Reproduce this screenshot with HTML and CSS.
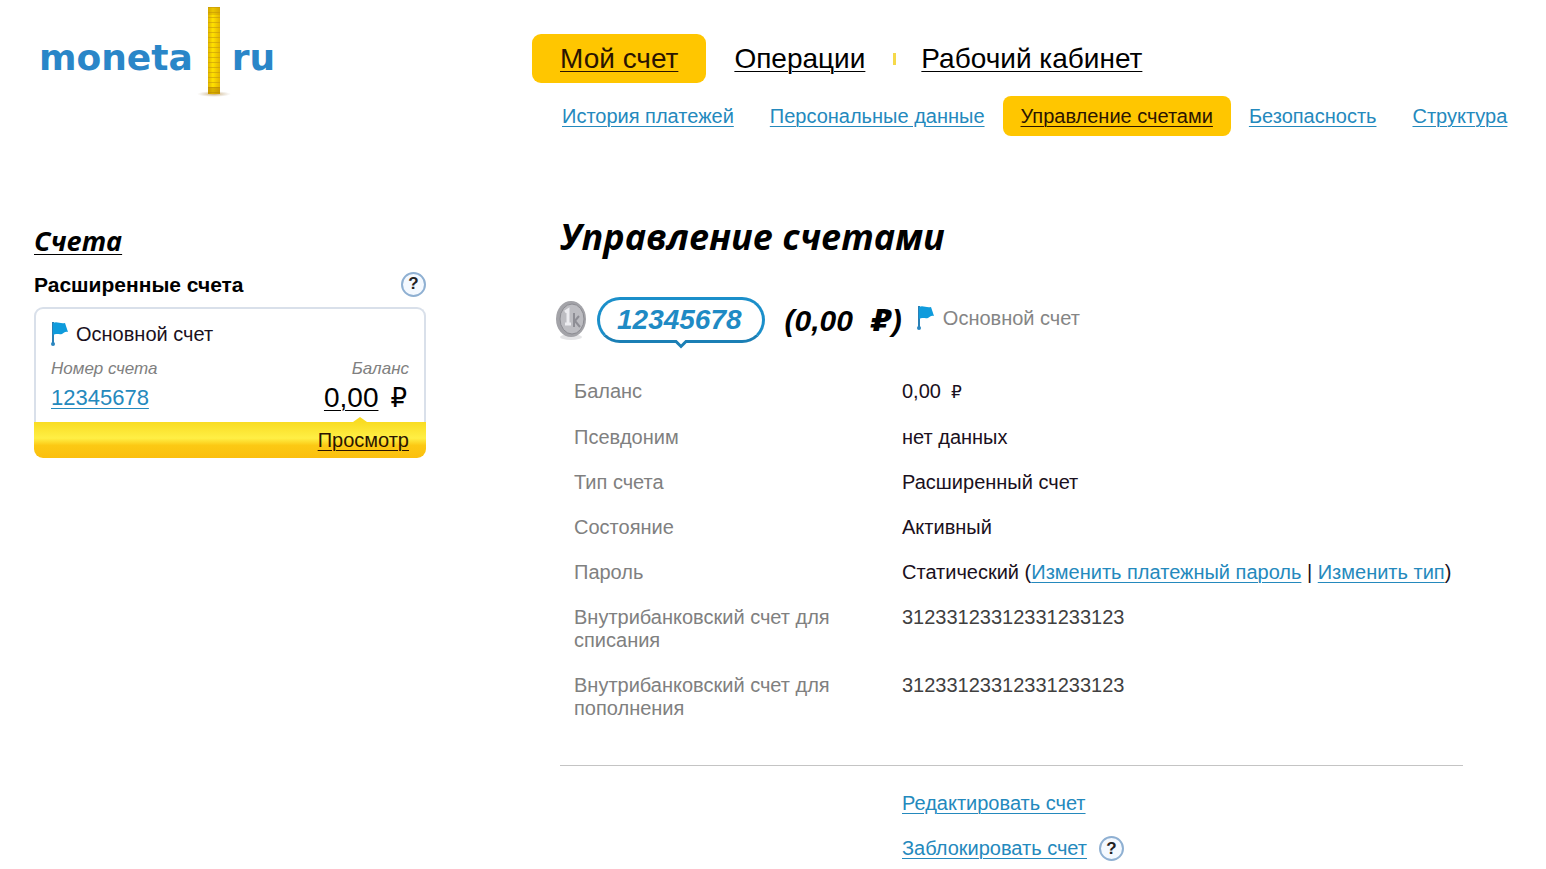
FILE: index.html
```html
<!DOCTYPE html>
<html lang="ru">
<head>
  <meta charset="UTF-8" />
  <meta name="viewport" content="width=device-width, initial-scale=1.0">
  <title>Управление счетами</title>
  <link rel="stylesheet" href="styles.css">
</head>
<body>

<!-- Шапка -->
<header class="header">
  <a class="logo" href="#">
    <span>moneta</span>
    <svg class="stack" width="36" height="96" viewBox="0 0 36 96">
      <defs>
        <linearGradient id="gold" x1="0" x2="1" y1="0" y2="0">
          <stop offset="0" stop-color="#e0b400" />
          <stop offset="0.4" stop-color="#ffe100" />
          <stop offset="1" stop-color="#e3b500" />
        </linearGradient>
        <pattern id="coins" width="12" height="5" patternUnits="userSpaceOnUse">
          <rect width="12" height="1" y="4" fill="#c79a0c" fill-opacity="0.6" />
        </pattern>
        <radialGradient id="shade">
          <stop offset="0" stop-color="#b8862c" stop-opacity="0.7" />
          <stop offset="1" stop-color="#b8a890" stop-opacity="0" />
        </radialGradient>
      </defs>
      <ellipse cx="18" cy="91" rx="17" ry="3" fill="url(#shade)" />
      <rect x="12" y="4" width="12" height="87" fill="url(#gold)" />
      <rect x="12" y="4" width="12" height="87" fill="url(#coins)" />
      <rect x="12" y="4" width="12" height="8" fill="#c39300" fill-opacity="0.35" />
      <rect x="12" y="84" width="12" height="7" fill="#b07a00" fill-opacity="0.45" />
    </svg>
    <span>ru</span>
  </a>

  <div class="menus">
    <nav class="menu">
      <a class="active" href="#">Мой счет</a>
      <a href="#">Операции</a>
      <i class="sep"></i>
      <a href="#">Рабочий кабинет</a>
    </nav>
    <nav class="submenu">
      <a href="#">История платежей</a>
      <a href="#">Персональные данные</a>
      <a class="active" href="#">Управление счетами</a>
      <a href="#">Безопасность</a>
      <a href="#">Структура</a>
    </nav>
  </div>
</header>

<div class="page">

  <!-- Список счетов -->
  <aside class="sidebar">
    <h2><a href="#">Счета</a></h2>
    <div class="group">
      <h3>Расширенные счета</h3>
      <button class="help" type="button" aria-label="Помощь">?</button>
    </div>
    <div class="card">
      <div class="card-body">
        <div class="card-name">
          <svg class="flag" width="18" height="26" viewBox="0 0 18 26">
            <path d="M2 1v23" stroke="#2a7fb5" stroke-width="2" />
            <path d="M2 2c4-2 7 1 12 0l3 9c-3-1-4 1-6 2-3 1-5-1-9 1z" fill="#0f9bdc" />
            <circle cx="2" cy="23" r="2" fill="#2a86c0" />
          </svg>
          <span>Основной счет</span>
        </div>
        <div class="card-row small">
          <span>Номер счета</span>
          <span>Баланс</span>
        </div>
        <div class="card-row">
          <a class="number" href="#">12345678</a>
          <span class="sum"><a href="#">0,00</a><span class="rub">₽</span></span>
        </div>
      </div>
      <div class="card-footer">
        <a href="#">Просмотр</a>
      </div>
    </div>
  </aside>

  <!-- Выбранный счет -->
  <main class="content">
    <h1>Управление счетами</h1>

    <div class="account">
      <svg class="coin" width="32" height="42" viewBox="0 0 32 42">
        <ellipse cx="16" cy="38" rx="11" ry="3" fill="#e4e4e6" />
        <ellipse cx="16" cy="20" rx="15" ry="18" fill="#a3a3a8" />
        <ellipse cx="17" cy="20" rx="12" ry="15" fill="#bdbdc2" stroke="#8b8b91" />
        <path d="M10 13l3-2v14m-3 0h6" fill="none" stroke="#ececf0" stroke-width="3" />
        <path d="M19 14v14m0-5l5-6m-4 5l5 6" fill="none" stroke="#8e8e95" stroke-width="2" />
      </svg>
      <span class="bubble">
        12345678
        <svg class="tail" width="16" height="9" viewBox="0 0 16 9">
          <path d="M2 0h12v1l-6 6-6-6z" fill="#fff" />
          <path d="M0 1.5h3l5 5 5-5h3" fill="none" stroke="#1b7fb5" stroke-width="3" />
        </svg>
      </span>
      <span class="total">(0,00<span class="rub">₽</span>)</span>
      <svg class="flag" width="18" height="26" viewBox="0 0 18 26">
        <path d="M2 1v23" stroke="#2a7fb5" stroke-width="2" />
        <path d="M2 2c4-2 7 1 12 0l3 9c-3-1-4 1-6 2-3 1-5-1-9 1z" fill="#0f9bdc" />
        <circle cx="2" cy="23" r="2" fill="#2a86c0" />
      </svg>
      <span class="type">Основной счет</span>
    </div>

    <table class="details">
      <tr><th scope="row">Баланс</th><td>0,00<span class="rub">₽</span></td></tr>
      <tr><th scope="row">Псевдоним</th><td>нет данных</td></tr>
      <tr><th scope="row">Тип счета</th><td>Расширенный счет</td></tr>
      <tr><th scope="row">Состояние</th><td>Активный</td></tr>
      <tr><th scope="row">Пароль</th><td>Статический (<a href="#">Изменить платежный пароль</a> | <a href="#">Изменить тип</a>)</td></tr>
      <tr><th scope="row">Внутрибанковский счет для списания</th><td class="bank">31233123312331233123</td></tr>
      <tr><th scope="row">Внутрибанковский счет для пополнения</th><td class="bank">31233123312331233123</td></tr>
    </table>

    <div class="actions">
      <div><a href="#">Редактировать счет</a></div>
      <div>
        <a href="#">Заблокировать счет</a>
        <button class="help" type="button" aria-label="Помощь">?</button>
      </div>
    </div>
  </main>

</div>

</body>
</html>
```
FILE: styles.css
```css
* {
  box-sizing: border-box;
}

body {
  margin: 0;
  background: #fff;
  color: #1a1020;
  font-family: "Liberation Sans", Arial, sans-serif;
  font-size: 20px;
  line-height: 23px;
}

h1, h2, h3 {
  margin: 0;
  color: #000;
}

a {
  color: #2489bd;
  text-decoration: underline;
  text-decoration-thickness: 1px;
  text-underline-offset: 3px;
}

.header, .page {
  display: grid;
  grid-template-columns: 392px minmax(0, 1fr);
  column-gap: 134px;
  padding-left: 34px;
}

/* Шапка */
.header {
  padding-top: 3px;
}

.logo {
  display: flex;
  align-items: flex-start;
  height: 96px;
  padding-left: 5px;
  color: #2a86c8;
  font-family: "DejaVu Sans", Verdana, sans-serif;
  font-size: 36px;
  font-weight: bold;
  line-height: 110px;
  text-decoration: none;
}

.stack {
  margin-left: 3px;
}

.menus {
  padding-top: 31px;
}

.menu, .submenu {
  display: flex;
  align-items: center;
  white-space: nowrap;
}

.menu {
  margin-left: -28px;
  font-size: 28px;
  line-height: 49px;
}

.menu a {
  padding: 0 28px;
  border-radius: 9px;
  color: #000;
}

.sep {
  width: 3px;
  height: 12px;
  margin-right: -3px;
  background: #f5d94a;
}

.submenu {
  margin: 13px 0 0 -16px;
  line-height: 40px;
}

.submenu a {
  padding: 0 18px;
  border-radius: 8px;
}

.menu .active, .submenu .active {
  background: #ffc600;
  color: #2b1400;
}

/* Список счетов */
.page {
  padding-top: 78px;
}

.sidebar {
  padding-top: 11px;
}

.sidebar h2 {
  font-family: "Open Sans", sans-serif;
  font-size: 27px;
  font-style: italic;
  line-height: 32px;
}

.sidebar h2 a {
  color: #000;
}

.group {
  display: flex;
  justify-content: space-between;
  align-items: center;
  height: 50px;
  padding-top: 4px;
}

.group h3 {
  font-size: 21px;
}

.help {
  width: 25px;
  height: 25px;
  padding: 0;
  border: 2px solid #8fb0d2;
  border-radius: 50%;
  background: #f4f9ff;
  color: #222;
  font-family: inherit;
  font-size: 17px;
  font-weight: bold;
  line-height: 20px;
  cursor: pointer;
}

.rub {
  margin-left: 10px;
  font-family: "DejaVu Sans", sans-serif;
}

.card-body {
  height: 115px;
  padding: 12px 15px 0;
  border: 2px solid #d9e0ea;
  border-bottom: 0;
  border-radius: 9px 9px 0 0;
}

.card-name {
  display: flex;
  gap: 7px;
  height: 38px;
}

.card-name span {
  line-height: 26px;
}

.card-row {
  display: flex;
  justify-content: space-between;
  align-items: center;
  line-height: 38px;
}

.small {
  color: #808080;
  font-size: 17px;
  font-style: italic;
  line-height: 20px;
}

.number {
  font-size: 22px;
}

.sum {
  padding-right: 2px;
  color: #000;
  font-size: 28px;
}

.sum .rub {
  margin-left: 12px;
  font-size: 26px;
}

.sum a {
  color: #000;
}

.card-footer {
  position: relative;
  padding: 0 17px;
  border-radius: 0 0 9px 9px;
  background: linear-gradient(#f9dc22, #ffef45 45%, #fcc914 65%, #fbbf0e);
  line-height: 36px;
  text-align: right;
}

.card-footer::before {
  content: "";
  position: absolute;
  top: -5px;
  right: 59px;
  border: 7px solid transparent;
  border-top: 0;
  border-bottom: 5px solid #f9dc22;
}

.card-footer a {
  color: #2b1400;
}

/* Выбранный счет */
.content {
  max-width: 903px;
}

.content h1 {
  font-family: "Open Sans", sans-serif;
  font-size: 36px;
  font-style: italic;
  line-height: 46px;
}

.account {
  display: flex;
  align-items: center;
  height: 46px;
  margin: 37px 0 26px -5px;
}

.bubble {
  position: relative;
  margin: 0 20px 0 10px;
  padding: 0 20px 0 17px;
  border: 3px solid #1b8fca;
  border-bottom-color: #1b7fb5;
  border-radius: 23px;
  color: #1f8ac4;
  font-size: 28px;
  font-style: italic;
  font-weight: bold;
  line-height: 40px;
}

/* хвостик под номером */
.tail {
  position: absolute;
  top: 100%;
  left: 50%;
  margin-left: -8px;
}

.total {
  margin-right: 15px;
  color: #000;
  font-size: 30px;
  font-style: italic;
  font-weight: bold;
}

.total .rub {
  margin-left: 18px;
  font-size: 30px;
}

.type {
  margin-left: 8px;
  color: #858585;
}

.account .flag, .type {
  margin-bottom: 4px;
}

.details {
  width: 100%;
  border-collapse: collapse;
}

.details th, .details td {
  padding: 11px 0;
  font-weight: normal;
  text-align: left;
  vertical-align: top;
}

.details th {
  width: 342px;
  padding-left: 14px;
  padding-right: 60px;
  color: #808080;
}

.details .rub {
  font-size: 17px;
}

.details .bank {
  color: #404040;
}

.actions {
  margin-top: 34px;
  padding: 15px 0 0 342px;
  border-top: 1px solid #c4c4c4;
}

.actions div {
  display: flex;
  align-items: center;
  gap: 12px;
  height: 45px;
}
```
